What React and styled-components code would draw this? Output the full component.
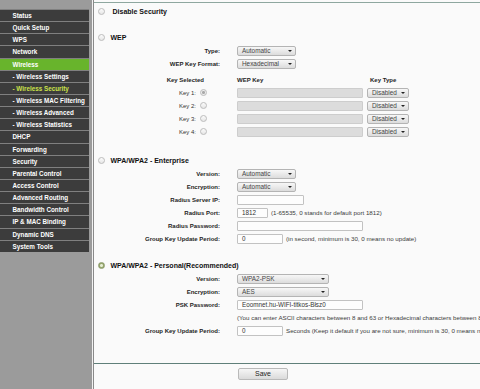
import React from 'react'
import styled, { createGlobalStyle } from 'styled-components'

const GlobalStyle = createGlobalStyle`
  html, body {
    margin: 0;
    padding: 0;
    overflow: hidden;
    font-family: "Liberation Sans", Arial, sans-serif;
  }
`

const Page = styled.div`
  width: 480px;
  height: 389px;
  display: flex;
  overflow: hidden;
`

const Sidebar = styled.div`
  width: 92px;
  flex: none;
  background: #9b9b9b;
  padding: 9px 3px 0 0;
  box-sizing: border-box;
  display: flex;
  flex-direction: column;
`

const MenuItem = styled.div`
  height: 11.15px;
  border-top: 1px solid #808080;
  background: ${p => (p.$active ? '#68b42c' : '#3c3c3c')};
  color: ${p => (p.$current ? '#cde24a' : '#fff')};
  font-size: 6.3px;
  font-weight: bold;
  line-height: 11.15px;
  padding-left: 12.5px;
  white-space: nowrap;
  overflow: hidden;
`

const Divider = styled.div`
  width: 2px;
  flex: none;
  border-left: 1px solid #f2f2f2;
  background: #8a8a8a;
  box-sizing: border-box;
`

const Main = styled.div`
  flex: 1;
  min-width: 0;
  background: #fafafa;
  display: flex;
  flex-direction: column;
  overflow: hidden;
`

const TopRule = styled.div`
  margin-top: 2px;
  height: 1px;
  background: #8ea79f;
`

const SectionHead = styled.div`
  display: flex;
  align-items: center;
  height: 12px;
  margin-top: ${p => p.$top}px;
  padding-left: 3.5px;
  white-space: nowrap;
`

const Radio = styled.span`
  width: 7px;
  height: 7px;
  flex: none;
  border-radius: 50%;
  box-sizing: border-box;
  border: 1px solid ${p => (p.$green ? '#8c9a6c' : '#bcbcbc')};
  background: ${p =>
    p.$green
      ? 'radial-gradient(circle, #e4ecd2 0 1.3px, #95a66a 1.6px)'
      : p.$checked
      ? 'radial-gradient(circle, #a9a9a9 0 1.3px, #ececec 1.6px)'
      : 'linear-gradient(#fbfbfb, #e6e6e6)'};
`

const HeadText = styled.span`
  font-size: 7px;
  font-weight: bold;
  color: #111;
  margin-left: ${p => p.$gap || 6}px;
`

const Row = styled.div`
  display: grid;
  grid-template-columns: 126px 1fr;
  column-gap: 17px;
  height: 13px;
  align-items: center;
  margin-top: ${p => p.$top || 0}px;
  white-space: nowrap;
`

const Label = styled.div`
  text-align: right;
  font-size: 6px;
  font-weight: bold;
  color: #1e1e1e;
  padding-right: ${p => p.$pad || 0}px;
  display: flex;
  justify-content: flex-end;
  align-items: center;
  gap: 4px;
`

const KeyName = styled.span`
  font-weight: normal;
  color: #333;
`

const Field = styled.div`
  display: flex;
  align-items: center;
  gap: ${p => p.$gap || 3}px;
  min-width: 0;
`

const SelectBox = styled.div`
  width: ${p => p.$w}px;
  height: 10px;
  box-sizing: border-box;
  flex: none;
  border: 1px solid #b4b4b4;
  border-radius: 2px;
  background: linear-gradient(#f7f7f7, #dcdcdc);
  display: flex;
  align-items: center;
  justify-content: space-between;
  padding: 0 3px 0 4px;
  font-size: 6.4px;
  color: #444;
`

const Arrow = styled.span`
  width: 0;
  height: 0;
  border-left: 2px solid transparent;
  border-right: 2px solid transparent;
  border-top: 2.5px solid #222;
`

const Select = ({ w, children }) => (
  <SelectBox $w={w}>
    <span>{children}</span>
    <Arrow />
  </SelectBox>
)

const Input = styled.div`
  width: ${p => p.$w}px;
  height: 10px;
  flex: none;
  box-sizing: border-box;
  border: 1px solid ${p => (p.$off ? '#cdcdcd' : '#c2c2c2')};
  border-radius: 1px;
  background: ${p => (p.$off ? '#dcdcdc' : '#fdfdfd')};
  font-size: 6.3px;
  color: #333;
  line-height: 8px;
  padding-left: 4px;
`

const Hint = styled.span`
  font-size: 6.2px;
  color: #3a3a3a;
`

const ColHead = styled.span`
  font-size: 6px;
  font-weight: bold;
  color: #1e1e1e;
  width: ${p => p.$w || 'auto'};
`

const Footer = styled.div`
  margin-top: auto;
  height: 26px;
  border-top: 1px solid #5f7f79;
  display: grid;
  grid-template-columns: 126px 1fr;
  column-gap: 18px;
  padding-top: 4px;
  box-sizing: border-box;
`

const SaveButton = styled.div`
  grid-column: 2;
  width: 50px;
  height: 12px;
  box-sizing: border-box;
  border: 1px solid #b9b9b9;
  border-radius: 2px;
  background: linear-gradient(#f6f6f6, #dadada);
  font-size: 7px;
  color: #222;
  text-align: center;
  line-height: 10px;
`

const menu = [
  ['Status'],
  ['Quick Setup'],
  ['WPS'],
  ['Network'],
  ['Wireless', 'active'],
  ['- Wireless Settings'],
  ['- Wireless Security', 'current'],
  ['- Wireless MAC Filtering'],
  ['- Wireless Advanced'],
  ['- Wireless Statistics'],
  ['DHCP'],
  ['Forwarding'],
  ['Security'],
  ['Parental Control'],
  ['Access Control'],
  ['Advanced Routing'],
  ['Bandwidth Control'],
  ['IP & MAC Binding'],
  ['Dynamic DNS'],
  ['System Tools'],
]

const keys = [1, 2, 3, 4]

export default function App() {
  return (
    <Page>
      <GlobalStyle />
      <Sidebar>
        {menu.map(([name, kind]) => (
          <MenuItem key={name} $active={kind === 'active'} $current={kind === 'current'}>
            {name}
          </MenuItem>
        ))}
      </Sidebar>
      <Divider />
      <Main>
        <TopRule />

        <SectionHead $top={2}>
          <Radio />
          <HeadText $gap={8}>Disable Security</HeadText>
        </SectionHead>

        <SectionHead $top={14}>
          <Radio />
          <HeadText>WEP</HeadText>
        </SectionHead>
        <Row $top={1}>
          <Label>Type:</Label>
          <Field><Select w={59}>Automatic</Select></Field>
        </Row>
        <Row>
          <Label>WEP Key Format:</Label>
          <Field><Select w={59}>Hexadecimal</Select></Field>
        </Row>
        <Row $top={3}>
          <Label $pad={16}>Key Selected</Label>
          <Field $gap={0}>
            <ColHead $w="130px">WEP Key</ColHead>
            <ColHead>Key Type</ColHead>
          </Field>
        </Row>
        {keys.map(k => (
          <Row key={k}>
            <Label $pad={13}>
              <KeyName>Key {k}:</KeyName>
              <Radio $checked={k === 1} />
            </Label>
            <Field $gap={4}>
              <Input $w={126} $off />
              <Select w={42}>Disabled</Select>
            </Field>
          </Row>
        ))}

        <SectionHead $top={16}>
          <Radio />
          <HeadText>WPA/WPA2 - Enterprise</HeadText>
        </SectionHead>
        <Row $top={1}>
          <Label>Version:</Label>
          <Field><Select w={59}>Automatic</Select></Field>
        </Row>
        <Row>
          <Label>Encryption:</Label>
          <Field><Select w={59}>Automatic</Select></Field>
        </Row>
        <Row>
          <Label>Radius Server IP:</Label>
          <Field><Input $w={67} /></Field>
        </Row>
        <Row>
          <Label>Radius Port:</Label>
          <Field>
            <Input $w={31}>1812</Input>
            <Hint>(1-65535, 0 stands for default port 1812)</Hint>
          </Field>
        </Row>
        <Row>
          <Label>Radius Password:</Label>
          <Field><Input $w={126} /></Field>
        </Row>
        <Row>
          <Label>Group Key Update Period:</Label>
          <Field>
            <Input $w={46}>0</Input>
            <Hint>(in second, minimum is 30, 0 means no update)</Hint>
          </Field>
        </Row>

        <SectionHead $top={14}>
          <Radio $green />
          <HeadText>WPA/WPA2 - Personal(Recommended)</HeadText>
        </SectionHead>
        <Row $top={1}>
          <Label>Version:</Label>
          <Field><Select w={92}>WPA2-PSK</Select></Field>
        </Row>
        <Row>
          <Label>Encryption:</Label>
          <Field><Select w={92}>AES</Select></Field>
        </Row>
        <Row>
          <Label>PSK Password:</Label>
          <Field><Input $w={126}>Eoomnet.hu-WIFI-titkos-Błsz0</Input></Field>
        </Row>
        <Row>
          <Label />
          <Field>
            <Hint>(You can enter ASCII characters between 8 and 63 or Hexadecimal characters between 8 and 64.)</Hint>
          </Field>
        </Row>
        <Row>
          <Label>Group Key Update Period:</Label>
          <Field>
            <Input $w={46}>0</Input>
            <Hint>Seconds (Keep it default if you are not sure, minimum is 30, 0 means no update)</Hint>
          </Field>
        </Row>

        <Footer>
          <SaveButton>Save</SaveButton>
        </Footer>
      </Main>
    </Page>
  )
}
